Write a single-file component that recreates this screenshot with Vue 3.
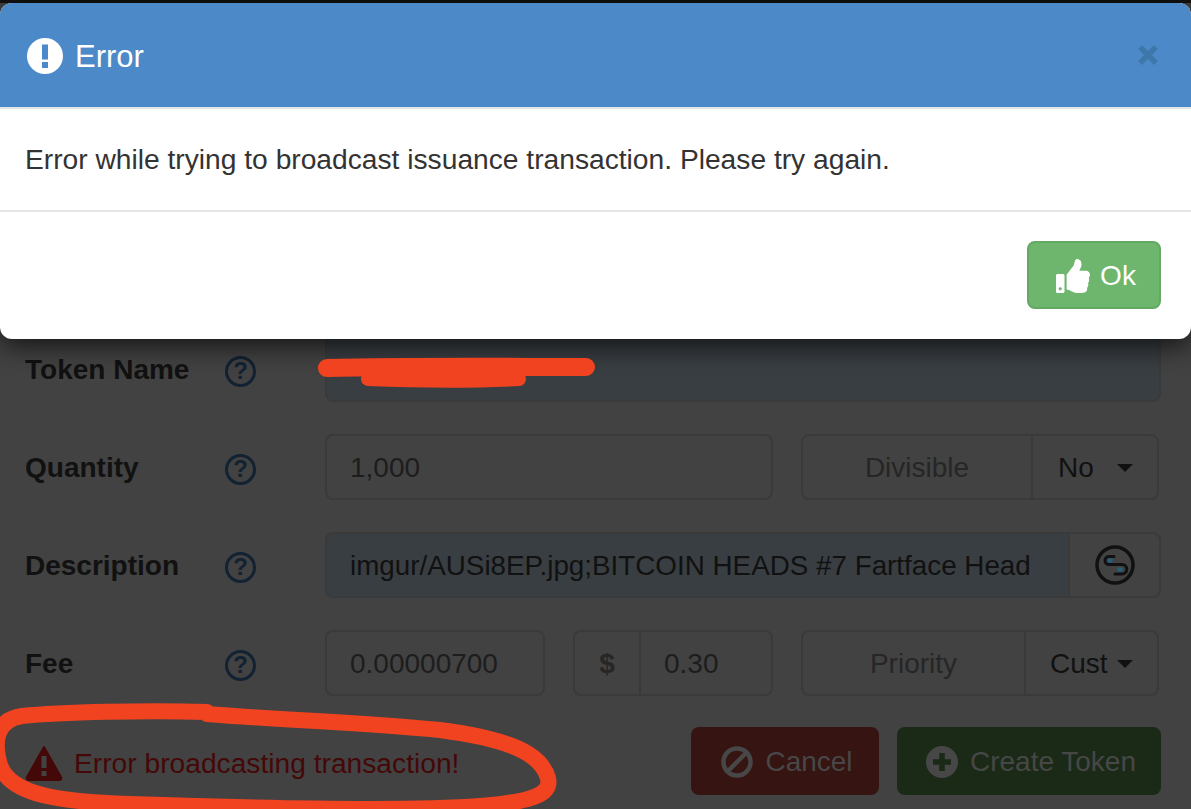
<template>
  <div class="page">
    <div class="top-strip"></div>

    <form class="form" @submit.prevent>
      <div class="row" v-for="row in rows" :key="row.label">
        <div class="label-col">
          <label class="label">{{ row.label }}</label>
          <span class="help">?</span>
        </div>

        <div v-if="row.label === 'Token Name'" class="input tinted grow"></div>

        <template v-else-if="row.label === 'Quantity'">
          <div class="input qty">1,000</div>
          <div class="group select-group">
            <span class="addon divisible">Divisible</span>
            <span class="select no">No<i class="caret"></i></span>
          </div>
        </template>

        <div v-else-if="row.label === 'Description'" class="group grow">
          <div class="input-inner tinted grow">imgur/AUSi8EP.jpg;BITCOIN HEADS #7 Fartface Head</div>
          <span class="addon logo-addon">
            <svg class="logo" viewBox="0 0 40 40" fill="none">
              <circle cx="20" cy="20" r="18" stroke="#111" stroke-width="3.500" />
              <path d="M19 11.500H14a4 4 0 0 0 0 8h13a4.750 4.750 0 0 1 0 9.500H20" stroke="#111" stroke-width="3" stroke-linecap="round" />
              <path d="M13 15.500h4.500M22.500 24.500h5" stroke="#245f7c" stroke-width="4" />
            </svg>
          </span>
        </div>

        <template v-else>
          <div class="input fee">0.00000700</div>
          <div class="group usd">
            <span class="addon dollar">$</span>
            <span class="input-inner">0.30</span>
          </div>
          <div class="group select-group">
            <span class="addon priority">Priority</span>
            <span class="select cust">Cust<i class="caret"></i></span>
          </div>
        </template>
      </div>

      <div class="actions">
        <div class="status">
          <svg class="warn" viewBox="0 0 38 36">
            <path d="M19 2 36 32a2 2 0 0 1-2 3H4a2 2 0 0 1-2-3z" fill="#450808" stroke="#450808" stroke-width="2" stroke-linejoin="round" />
            <rect x="16.500" y="11" width="5" height="12" fill="#424242" />
            <rect x="16.500" y="26" width="5" height="5" fill="#424242" />
          </svg>
          <span>Error broadcasting transaction!</span>
        </div>
        <button class="btn cancel" type="button">
          <svg class="btn-icon" viewBox="0 0 32 32" fill="none">
            <circle cx="16" cy="16" r="13.500" stroke="#474747" stroke-width="4.500" />
            <path d="M7 25 25 7" stroke="#474747" stroke-width="4.500" />
          </svg>
          Cancel
        </button>
        <button class="btn create" type="button">
          <svg class="btn-icon" viewBox="0 0 32 32">
            <circle cx="16" cy="16" r="16" fill="#474747" />
            <path d="M16 7v18M7 16h18" stroke="#1a2a17" stroke-width="5.500" />
          </svg>
          Create Token
        </button>
      </div>
    </form>

    <div class="modal">
      <header class="modal-head">
        <svg class="head-icon" viewBox="0 0 36 36">
          <circle cx="18" cy="18" r="18" fill="#fff" />
          <rect x="15" y="6.500" width="6" height="15" fill="#4b89c8" />
          <rect x="15" y="24" width="6" height="6" fill="#4b89c8" />
        </svg>
        <h4 class="modal-title">Error</h4>
        <svg class="close" viewBox="0 0 22 22">
          <path d="M3 3 19 19M19 3 3 19" stroke="#3e78ab" stroke-width="5.500" />
        </svg>
      </header>
      <div class="modal-body">Error while trying to broadcast issuance transaction. Please try again.</div>
      <footer class="modal-foot">
        <button class="btn ok" type="button">
          <svg class="thumb" viewBox="0 0 512 512">
            <path fill="#fff" d="M104 224H24c-13.255 0-24 10.745-24 24v240c0 13.255 10.745 24 24 24h80c13.255 0 24-10.745 24-24V248c0-13.255-10.745-24-24-24zM64 472c-13.255 0-24-10.745-24-24s10.745-24 24-24 24 10.745 24 24-10.745 24-24 24zM384 81.452c0 42.416-25.97 66.208-33.277 94.548h101.723c33.397 0 59.397 27.746 59.553 58.098.084 17.938-7.546 37.249-19.439 49.197l-.11.11c9.836 23.337 8.237 56.037-9.308 79.469 8.681 25.895-.069 57.704-16.382 74.757 4.298 17.598 2.244 32.575-6.148 44.632C440.202 511.587 389.616 512 346.839 512l-2.845-.001c-48.287-.017-87.806-17.598-119.56-31.725-15.957-7.099-36.821-15.887-52.651-16.178-6.54-.12-11.783-5.457-11.783-11.998v-213.77c0-3.2 1.282-6.271 3.558-8.521 39.614-39.144 56.648-80.587 89.117-113.111 14.804-14.832 20.188-37.236 25.393-58.902C282.515 39.293 291.817 0 312 0c24 0 72 8 72 81.452z" />
          </svg>
          Ok
        </button>
      </footer>
    </div>

    <!-- red marker scribbles drawn over the screenshot -->
    <svg class="scribbles" viewBox="0 0 1191 809" fill="none" stroke="#f24320" stroke-linecap="round">
      <path d="M327 368C420 366 510 367 586 367" stroke-width="18" />
      <path d="M368 379C420 381 480 381 519 379" stroke-width="14" />
      <path d="M207 712C150 710 60 712 22 716C-6 720 -6 745 0 765C10 795 60 802 130 804C250 808 400 812 480 806C530 802 552 795 548 778C540 750 500 738 440 730C360 722 280 720 207 714" stroke-width="16" />
    </svg>
  </div>
</template>

<script setup>
const rows = [
  { label: 'Token Name' },
  { label: 'Quantity' },
  { label: 'Description' },
  { label: 'Fee' }
]
</script>

<style>
html, body {
  margin: 0;
  background: #424242;
}
</style>

<style scoped>
.page {
  position: relative;
  width: 1191px;
  height: 809px;
  overflow: hidden;
  background: #424242;
  font-family: 'Liberation Sans', Arial, sans-serif;
  font-size: 28px;
  color: #191919;
}

.top-strip {
  height: 3px;
  background: #111;
}

.form {
  display: flex;
  flex-direction: column;
  gap: 32px;
  padding: 333px 30px 0 25px;
}

.row {
  display: flex;
  gap: 28px;
  height: 66px;
}

.label-col {
  width: 272px;
  flex: none;
  display: flex;
  align-items: center;
}

.label {
  width: 200px;
  padding-top: 2px;
  font-weight: 700;
  color: #111;
}

.help {
  width: 31px;
  height: 31px;
  box-sizing: border-box;
  border: 3px solid #122232;
  border-radius: 50%;
  display: flex;
  align-items: center;
  justify-content: center;
  font-size: 24px;
  font-weight: 700;
  color: #122232;
  margin-top: 4px;
}

.input {
  box-sizing: border-box;
  height: 66px;
  border: 2px solid #3a3a3a;
  border-radius: 8px;
  padding: 2px 23px 0;
  display: flex;
  align-items: center;
  color: #1d1d1d;
}

.grow {
  flex: 1;
}

.tinted {
  background: #393e42;
  color: #111;
}

.qty {
  width: 448px;
}

.fee {
  width: 220px;
}

.group {
  box-sizing: border-box;
  height: 66px;
  border: 2px solid #3a3a3a;
  border-radius: 8px;
  display: flex;
  overflow: hidden;
}

.select-group {
  width: 358px;
}

.usd {
  width: 200px;
}

.addon {
  box-sizing: border-box;
  padding-top: 2px;
  display: flex;
  align-items: center;
  justify-content: center;
  color: #262626;
}

.divisible {
  width: 230px;
  border-right: 2px solid #3a3a3a;
}

.priority {
  width: 223px;
  border-right: 2px solid #3a3a3a;
}

.dollar {
  width: 66px;
  border-right: 2px solid #3a3a3a;
  font-weight: 700;
}

.input-inner {
  display: flex;
  align-items: center;
  padding: 2px 23px 0;
  white-space: nowrap;
  color: #1d1d1d;
}

.input-inner.tinted {
  color: #111;
  font-size: 27.8px;
}

.logo-addon {
  width: 91px;
  padding-top: 0;
  border-left: 2px solid #3a3a3a;
}

.logo {
  width: 40px;
  height: 40px;
}

.select {
  flex: 1;
  padding-top: 2px;
  display: flex;
  align-items: center;
  color: #111;
  position: relative;
}

.no {
  padding-left: 25px;
}

.cust {
  padding-left: 24px;
}

.caret {
  position: absolute;
  right: 24px;
  top: 28px;
  border-left: 8px solid transparent;
  border-right: 8px solid transparent;
  border-top: 8px solid #111;
}

.actions {
  display: flex;
  align-items: center;
  gap: 18px;
  height: 68px;
  margin-top: -1px;
}

.status {
  display: flex;
  align-items: center;
  gap: 11px;
  margin-right: auto;
  padding-top: 4px;
  font-size: 28.2px;
  color: #450808;
}

.warn {
  width: 38px;
  height: 36px;
}

.btn {
  box-sizing: border-box;
  height: 68px;
  display: flex;
  align-items: center;
  justify-content: center;
  gap: 12px;
  border: none;
  border-radius: 8px;
  padding: 2px 0 0 4px;
  font: inherit;
  color: #474747;
}

.btn-icon {
  width: 32px;
  height: 32px;
}

.cancel {
  width: 188px;
  background: #361412;
}

.create {
  width: 264px;
  background: #1a2a17;
}

.modal {
  position: absolute;
  top: 3px;
  left: 0;
  width: 100%;
  height: 336px;
  background: #fff;
  border-radius: 12px;
  box-shadow: 0 8px 26px rgba(0, 0, 0, 0.65);
  display: flex;
  flex-direction: column;
  overflow: hidden;
  color: #333;
}

.modal-head {
  flex: none;
  height: 104px;
  box-sizing: border-box;
  background: #4b89c8;
  display: flex;
  align-items: center;
  padding: 0 32px 0 27px;
  color: #fff;
}

.head-icon {
  width: 36px;
  height: 36px;
  margin-top: 2px;
}

.modal-title {
  margin: 4px 0 0 12px;
  font-size: 31px;
  font-weight: 400;
}

.close {
  width: 22px;
  height: 22px;
  margin-left: auto;
}

.modal-body {
  flex: none;
  height: 103px;
  box-sizing: border-box;
  border-top: 2px solid #e5e5e5;
  padding: 30px 25px 0;
  font-size: 28.2px;
  line-height: 40px;
}

.modal-foot {
  flex: 1;
  border-top: 2px solid #e5e5e5;
  display: flex;
  justify-content: flex-end;
  padding: 29px 30px 0;
}

.ok {
  width: 134px;
  gap: 10px;
  background: #6eb66d;
  border: 2px solid #63a962;
  color: #fff;
}

.thumb {
  width: 34px;
  height: 34px;
}

.scribbles {
  position: absolute;
  inset: 0;
  width: 1191px;
  height: 809px;
  pointer-events: none;
}
</style>
